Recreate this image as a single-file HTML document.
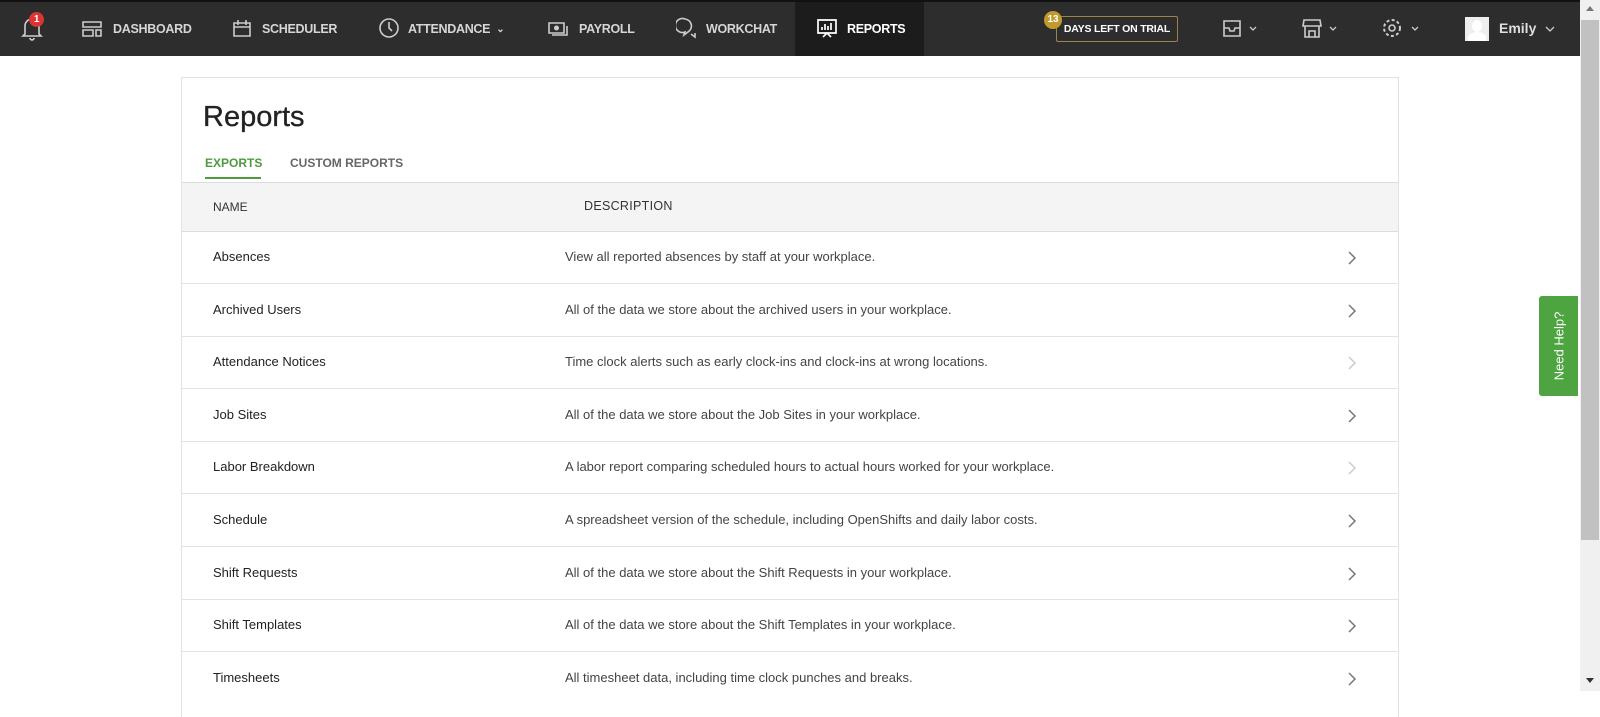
<!DOCTYPE html>
<html><head><meta charset="utf-8"><style>
*{box-sizing:border-box;margin:0;padding:0}
body{width:1600px;height:691px;overflow:hidden;background:#fff;font-family:"Liberation Sans",sans-serif;position:relative}
.hdr{position:absolute;left:0;top:0;width:1580px;height:56px;background:#2d2d2d;border-top:2px solid #111}
.ni{position:absolute;top:0;height:54px;display:flex;align-items:center;color:#d6d6d6;font-size:12.5px;font-weight:bold;letter-spacing:-0.3px}
.ni svg{position:absolute}
.rep{background:#1c1c1c;color:#fff}
.card{position:absolute;left:181px;top:77px;width:1218px;height:640px;border:1px solid #e2e2e2;border-bottom:none}
h1{position:absolute;left:21px;top:23px;font-size:29px;font-weight:normal;color:#222;-webkit-text-stroke:0.3px #222}
.tab{position:absolute;top:78px;font-size:12px;font-weight:bold;color:#666}
.th{position:absolute;left:0;top:104px;width:1216px;height:50px;background:#f4f4f4;border-top:1px solid #ddd;border-bottom:1px solid #ddd;font-size:12px;color:#333}
.row{position:absolute;left:0;width:1216px;height:53px;border-bottom:1px solid #e2e2e2;font-size:13px;color:#333}
.row .n{position:absolute;left:31px;top:18px;color:#222}
.row .d{position:absolute;left:383px;top:18px;color:#444}
.row svg{position:absolute;left:1165px;top:20px}
.sb{position:absolute;left:1580px;top:0;width:20px;height:691px;background:#f0f0f0}
</style></head><body>
<div class="hdr">
 <div class="ni" style="left:20px;width:26px">
  <svg width="24" height="28" viewBox="0 0 24 28" style="left:0;top:12px"><path d="M5 20V12a7 7 0 0 1 14 0v8l2 2H3z M10 24a2 2 0 0 0 4 0" fill="none" stroke="#cfcfcf" stroke-width="1.6"/></svg>
  <div style="position:absolute;left:9px;top:10px;width:15px;height:15px;border-radius:50%;background:#d33;color:#fff;font-size:10px;text-align:center;line-height:15px">1</div>
 </div>
 <div class="ni" style="left:82px"><svg width="20" height="18" style="left:0;top:18px"><path d="M1 2h18v5H1z M1 10h10v6H1z M14 10h5v6h-5z" fill="none" stroke="#ccc" stroke-width="1.6"/></svg><span style="margin-left:31px">DASHBOARD</span></div>
 <div class="ni" style="left:232px"><svg width="20" height="20" style="left:0;top:16px"><path d="M2 5h16v13H2z M2 9h16 M6 2v5 M14 2v5" fill="none" stroke="#ccc" stroke-width="1.6"/></svg><span style="margin-left:30px">SCHEDULER</span></div>
 <div class="ni" style="left:378px"><svg width="22" height="22" style="left:0;top:15px"><circle cx="11" cy="11" r="9" fill="none" stroke="#ccc" stroke-width="1.6"/><path d="M11 5v6l3 3" fill="none" stroke="#ccc" stroke-width="1.6"/></svg><span style="margin-left:30px">ATTENDANCE</span><span style="margin-left:6px;font-size:10px">&#8964;</span></div>
 <div class="ni" style="left:548px"><svg width="20" height="16" style="left:0;top:19px"><path d="M1 2h15v10H1z M4 14h15V5" fill="none" stroke="#ccc" stroke-width="1.6"/><circle cx="8.5" cy="7" r="2.5" fill="#ccc"/></svg><span style="margin-left:31px">PAYROLL</span></div>
 <div class="ni" style="left:676px"><svg width="22" height="22" style="left:0;top:15px"><path d="M9 2a7 7 0 1 0 0 13l-1 3 4-3a7 7 0 0 0-3-13z M15 17l4 3v-4" fill="none" stroke="#ccc" stroke-width="1.6"/></svg><span style="margin-left:30px">WORKCHAT</span></div>
 <div class="ni rep" style="left:795px;width:129px"><svg width="22" height="22" style="left:21px;top:16px"><path d="M2 2h18v13H2z M7 19l4-4 4 4 M6 12V9 M9 12V6 M12 12V8 M15 12V5" fill="none" stroke="#fff" stroke-width="1.7"/></svg><span style="margin-left:52px">REPORTS</span></div>
 <div style="position:absolute;left:1056px;top:14px;width:122px;height:26px;border:1px solid #9a8448;border-radius:2px;color:#fff;font-size:10.5px;font-weight:bold;text-align:center;line-height:25px;letter-spacing:-0.2px">DAYS LEFT ON TRIAL</div>
 <div style="position:absolute;left:1044px;top:9px;width:18px;height:18px;border-radius:50%;background:#c19a2e;color:#fff;font-size:10px;font-weight:bold;text-align:center;line-height:18px">13</div>
 <svg width="40" height="22" style="position:absolute;left:1222px;top:16px"><path d="M2 3h16v15H2z M2 10h5l1 3h4l1-3h5" fill="none" stroke="#ccc" stroke-width="1.6"/><path d="M28 9l3 3 3-3" fill="none" stroke="#ccc" stroke-width="1.3"/></svg>
 <svg width="40" height="22" style="position:absolute;left:1302px;top:16px"><path d="M2 2h16l1 6H1z M3 8v11h14V8 M7 19v-6h6v6" fill="none" stroke="#ccc" stroke-width="1.6"/><path d="M28 9l3 3 3-3" fill="none" stroke="#ccc" stroke-width="1.3"/></svg>
 <svg width="42" height="22" style="position:absolute;left:1382px;top:16px"><circle cx="10" cy="10" r="3" fill="none" stroke="#ccc" stroke-width="1.6"/><circle cx="10" cy="10" r="8" fill="none" stroke="#ccc" stroke-width="2" stroke-dasharray="3 2.3"/><path d="M30 9l3 3 3-3" fill="none" stroke="#ccc" stroke-width="1.3"/></svg>
 <div style="position:absolute;left:1465px;top:15px;width:24px;height:24px;background:#eee;overflow:hidden"><div style="position:absolute;left:7px;top:3px;width:10px;height:12px;border-radius:50%;background:#fff"></div><div style="position:absolute;left:3px;top:15px;width:18px;height:12px;border-radius:50% 50% 0 0;background:#fff"></div></div>
 <div style="position:absolute;left:1499px;top:18px;color:#ddd;font-size:14px;font-weight:bold">Emily</div>
 <svg width="12" height="8" style="position:absolute;left:1545px;top:24px"><path d="M1 1l4 4 4-4" fill="none" stroke="#ccc" stroke-width="1.3"/></svg>
</div>
<div class="card">
 <h1>Reports</h1>
 <div class="tab" style="left:23px;color:#4f9a3e">EXPORTS</div>
 <div style="position:absolute;left:23px;top:99px;width:56px;height:2px;background:#4f9a3e"></div>
 <div class="tab" style="left:108px">CUSTOM REPORTS</div>
 <div class="th"><span style="position:absolute;left:31px;top:17px">NAME</span><span style="position:absolute;left:402px;top:16px;font-size:12.5px;letter-spacing:.3px">DESCRIPTION</span></div>
</div>
<div class="sb"><div style="position:absolute;left:1px;top:20px;width:18px;height:520px;background:#c1c1c1"></div><div style="position:absolute;left:6px;top:6px;border:4px solid transparent;border-bottom:5px solid #777;border-top:none"></div><div style="position:absolute;left:6px;top:678px;border:4px solid transparent;border-top:5px solid #333;border-bottom:none"></div></div>
<div style="position:absolute;left:1539px;top:296px;width:39px;height:100px;background:#4ea440;border-radius:3px 0 0 3px"><div style="position:absolute;left:50%;top:50%;transform:translate(-50%,-50%) rotate(-90deg);white-space:nowrap;color:#fff;font-size:13px">Need Help?</div></div>
<div id="rows"></div>
<script>
var r=[["Absences","View all reported absences by staff at your workplace."],["Archived Users","All of the data we store about the archived users in your workplace."],["Attendance Notices","Time clock alerts such as early clock-ins and clock-ins at wrong locations."],["Job Sites","All of the data we store about the Job Sites in your workplace."],["Labor Breakdown","A labor report comparing scheduled hours to actual hours worked for your workplace."],["Schedule","A spreadsheet version of the schedule, including OpenShifts and daily labor costs."],["Shift Requests","All of the data we store about the Shift Requests in your workplace."],["Shift Templates","All of the data we store about the Shift Templates in your workplace."],["Timesheets","All timesheet data, including time clock punches and breaks."]];
var h="";r.forEach(function(x,i){var t=231+i*52.6;var c=(i==2||i==4)?"#ccc":"#777";var bb=i==8?"border-bottom:none;":"";h+='<div class="row" style="'+bb+'left:182px;top:'+t+'px"><span class="n">'+x[0]+'</span><span class="d">'+x[1]+'</span><svg width="10" height="14"><path d="M2 1l6 6-6 6" fill="none" stroke="'+c+'" stroke-width="1.5"/></svg></div>';});
document.getElementById("rows").innerHTML=h;
</script>
<div style="position:absolute;left:181px;top:77px;width:1px;height:620px;background:#e2e2e2"></div>
<div style="position:absolute;left:1398px;top:77px;width:1px;height:620px;background:#e2e2e2"></div>
</body></html>
